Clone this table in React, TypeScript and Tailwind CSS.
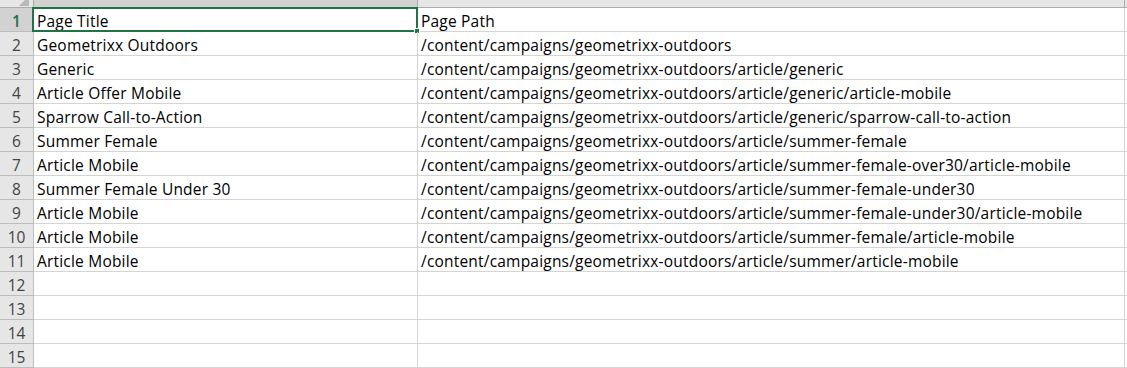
import React from 'react';

const rows: Array<[string, string]> = [
  ['Page Title', 'Page Path'],
  ['Geometrixx Outdoors', '/content/campaigns/geometrixx-outdoors'],
  ['Generic', '/content/campaigns/geometrixx-outdoors/article/generic'],
  ['Article Offer Mobile', '/content/campaigns/geometrixx-outdoors/article/generic/article-mobile'],
  ['Sparrow Call-to-Action', '/content/campaigns/geometrixx-outdoors/article/generic/sparrow-call-to-action'],
  ['Summer Female', '/content/campaigns/geometrixx-outdoors/article/summer-female'],
  ['Article Mobile', '/content/campaigns/geometrixx-outdoors/article/summer-female-over30/article-mobile'],
  ['Summer Female Under 30', '/content/campaigns/geometrixx-outdoors/article/summer-female-under30'],
  ['Article Mobile', '/content/campaigns/geometrixx-outdoors/article/summer-female-under30/article-mobile'],
  ['Article Mobile', '/content/campaigns/geometrixx-outdoors/article/summer-female/article-mobile'],
  ['Article Mobile', '/content/campaigns/geometrixx-outdoors/article/summer/article-mobile'],
  ['', ''],
  ['', ''],
  ['', ''],
  ['', ''],
];

const font = { fontFamily: '"Open Sans", "Noto Sans", sans-serif' };

export default function App() {
  return (
    <div className="w-[1127px] h-[368px] overflow-hidden bg-white text-[#000]" style={font}>
      <div className="flex h-[8px] bg-[#e6e6e6] border-b border-[#ababab]">
        <div className="w-[34px] shrink-0 relative overflow-hidden border-r border-[#ababab]">
          <div className="absolute right-[4px] bottom-[1px] w-0 h-0 border-l-[10px] border-l-transparent border-b-[10px] border-b-[#b8b8b8]" />
        </div>
        <div className="w-[384px] shrink-0 overflow-hidden bg-[#d2d2d2] border-r border-[#ababab] flex justify-center">
          <span className="text-[14px] leading-[20px] -mt-[15px] text-[#217346]">A</span>
        </div>
        <div className="w-[707px] shrink-0 overflow-hidden border-r border-[#ababab] flex justify-center">
          <span className="text-[14px] leading-[20px] -mt-[15px] text-[#444]">B</span>
        </div>
        <div className="flex-1" />
      </div>

      {rows.map(([title, path], i) => {
        const selected = i === 0;
        return (
          <div key={i} className="flex h-[24px]">
            <div
              className={`w-[34px] shrink-0 flex items-end justify-center text-[15.5px] leading-[20px] border-r border-b ${
                selected
                  ? 'bg-[#d2d2d2] text-[#217346] font-semibold border-r-[#217346] border-b-[#bdbdbd]'
                  : 'bg-[#e6e6e6] text-[#444] border-[#bdbdbd]'
              }`}
            >
              {i + 1}
            </div>
            <div className="relative w-[384px] shrink-0 border-r border-b border-[#d4d4d4] px-[3px] flex items-end text-[15.5px] tracking-[0.2px] leading-[20px] whitespace-nowrap">
              {title}
              {selected && (
                <div className="absolute -left-[2px] -top-[1px] -right-[1px] -bottom-[1px] border-2 border-[#217346]">
                  <div className="absolute -right-[4px] -bottom-[4px] w-[6px] h-[6px] bg-[#217346] border border-white" />
                </div>
              )}
            </div>
            <div className="w-[707px] shrink-0 border-r border-b border-[#d4d4d4] px-[3px] flex items-end text-[15.5px] tracking-[0.2px] leading-[20px] whitespace-nowrap">
              {path}
            </div>
            <div className="flex-1 border-b border-[#d4d4d4]" />
          </div>
        );
      })}
    </div>
  );
}
